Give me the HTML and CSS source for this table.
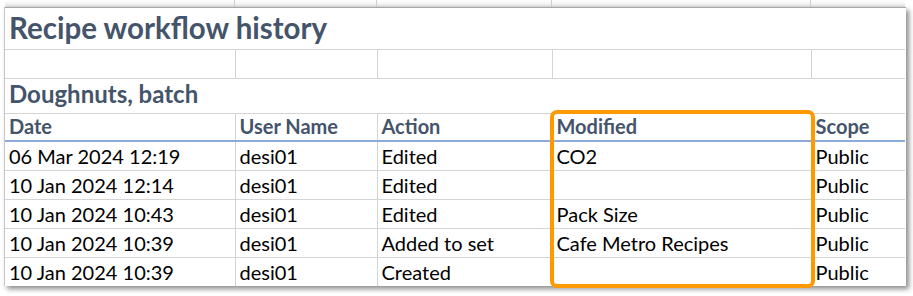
FILE: index.html
```html
<!DOCTYPE html>
<html>
<head>
<meta charset="utf-8">
<link rel="stylesheet" href="styles.css">
</head>
<body>
<div class="page">
  <div class="ghost">
    <span class="g g1"></span><span class="g g2"></span><span class="g g3"></span><span class="g g4"></span><span class="g g5"></span>
  </div>
  <div class="sheet">
    <table class="grid">
      <colgroup>
        <col class="c1"><col class="c2"><col class="c3"><col class="c4"><col class="c5">
      </colgroup>
      <tr class="r-title"><td colspan="5" class="title">Recipe workflow history</td></tr>
      <tr class="r-empty"><td></td><td></td><td></td><td></td><td></td></tr>
      <tr class="r-sub"><td colspan="5" class="sub">Doughnuts, batch</td></tr>
      <tr class="r-head"><th>Date</th><th>User Name</th><th>Action</th><th>Modified</th><th>Scope</th></tr>
      <tr class="r-data"><td>06 Mar 2024 12:19</td><td>desi01</td><td>Edited</td><td>CO2</td><td>Public</td></tr>
      <tr class="r-data"><td>10 Jan 2024 12:14</td><td>desi01</td><td>Edited</td><td></td><td>Public</td></tr>
      <tr class="r-data"><td>10 Jan 2024 10:43</td><td>desi01</td><td>Edited</td><td>Pack Size</td><td>Public</td></tr>
      <tr class="r-data"><td>10 Jan 2024 10:39</td><td>desi01</td><td>Added to set</td><td>Cafe Metro Recipes</td><td>Public</td></tr>
      <tr class="r-data"><td>10 Jan 2024 10:39</td><td>desi01</td><td>Created</td><td></td><td>Public</td></tr>
    </table>
    <div class="highlight"></div>
  </div>
</div>
</body>
</html>
```

FILE: styles.css
```css
html, body {
  margin: 0;
  padding: 0;
  background: #ffffff;
}

.page {
  width: 913px;
  height: 296px;
  position: relative;
  overflow: hidden;
  font-family: Lato, "Open Sans", sans-serif;
}

.ghost {
  display: flex;
  margin-left: 5px;
  width: 900px;
  height: 7px;
  background: linear-gradient(#ffffff, #f2f2f2 60%, #d9d9d9);
}

.g {
  height: 7px;
  border-right: 1px solid #cfcfcf;
  box-sizing: border-box;
}
.g1 { width: 230px; }
.g2 { width: 142px; }
.g3 { width: 175px; }
.g4 { width: 259px; }
.g5 { width: 94px; border-right: none; }

.sheet {
  position: relative;
  margin-left: 4px;
  width: 901px;
  border-top: 1px solid #a8a8a8;
  border-left: 1px solid #c8c8c8;
  background: #fff;
  box-shadow: 3px 3px 5px rgba(0, 0, 0, 0.45);
}

.grid {
  border-collapse: collapse;
  table-layout: fixed;
  width: 900px;
}

.c1 { width: 230px; }
.c2 { width: 142px; }
.c3 { width: 175px; }
.c4 { width: 259px; }
.c5 { width: 94px; }

.grid td, .grid th {
  border: 1px solid #d4d4d4;
  padding: 0 0 2px 4px;
  text-align: left;
  vertical-align: bottom;
  white-space: nowrap;
  overflow: visible;
  line-height: 1.2;
}

.grid tr td:first-child, .grid tr th:first-child { border-left: none; }
.grid tr td:last-child, .grid tr th:last-child { border-right: none; }
.grid tr:first-child td { border-top: none; }
.grid tr:last-child td { border-bottom: none; }

.r-title { height: 41px; }
.r-empty { height: 29px; }
.r-sub { height: 35px; }
.r-head { height: 28px; }
.r-data { height: 29px; }

.title {
  font-size: 29.5px;
  font-weight: 700;
  color: #44546a;
  padding-bottom: 3px !important;
}

.sub {
  font-size: 24px;
  font-weight: 700;
  color: #44546a;
  padding-bottom: 4px !important;
}

.r-head th {
  font-size: 20px;
  font-weight: 700;
  color: #44546a;
  border-bottom: 2px solid #8eaadb;
}

.r-data td {
  font-size: 20px;
  color: #000;
}

.highlight {
  position: absolute;
  left: 545px;
  top: 102px;
  width: 257px;
  height: 170px;
  border: 4.5px solid #ff9900;
  border-radius: 7px;
  pointer-events: none;
}
```
